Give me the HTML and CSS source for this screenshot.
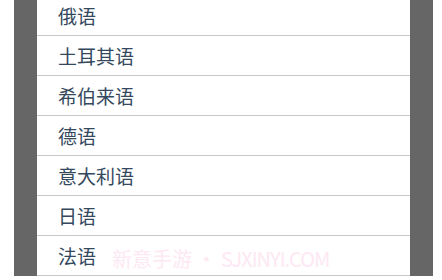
FILE: index.html
```html
<!DOCTYPE html>
<html lang="zh-CN">
<head>
    <meta charset="UTF-8">
    <meta name="viewport" content="width=device-width, initial-scale=1.0">
    <title>选择语言</title>
    <link rel="stylesheet" href="styles.css">
</head>
<body>
    <div id="page">
        <div class="frame">
            <div class="panel">
                <ul class="langlist">
                    <li>俄语</li>
                    <li>土耳其语</li>
                    <li>希伯来语</li>
                    <li>德语</li>
                    <li>意大利语</li>
                    <li>日语</li>
                    <li>法语</li>
                </ul>
            </div>
        </div>
        <div class="watermark">新意手游 • <span class="latin">SJXINYI.COM</span></div>
    </div>
</body>
</html>
```

FILE: styles.css
```css
html,body{
    margin:0;
    padding:0;
    background:#fff;
}
#page{
    position:relative;
    height:280px;
    overflow:hidden;
    padding:0 9px 0 14px;
    font-family:"Noto Sans CJK SC","Noto Sans",sans-serif;
}
#page .frame{
    background:#666;
    padding:0 23px;
    height:100%;
}
#page .panel{
    background:#fff;
    height:100%;
}
#page .langlist{
    list-style:none;
    margin:-4px 0 0 0;
    padding:0;
}
#page .langlist li{
    height:39px;
    line-height:39px;
    padding-left:21px;
    border-bottom:1px solid #c9c9c9;
    font-size:19px;
    color:#34495e;
}
#page .watermark{
    position:absolute;
    left:112px;
    top:244px;
    font-size:20px;
    color:#fde8f3;
    white-space:nowrap;
}
#page .watermark .latin{
    letter-spacing:-1px;
}
```
